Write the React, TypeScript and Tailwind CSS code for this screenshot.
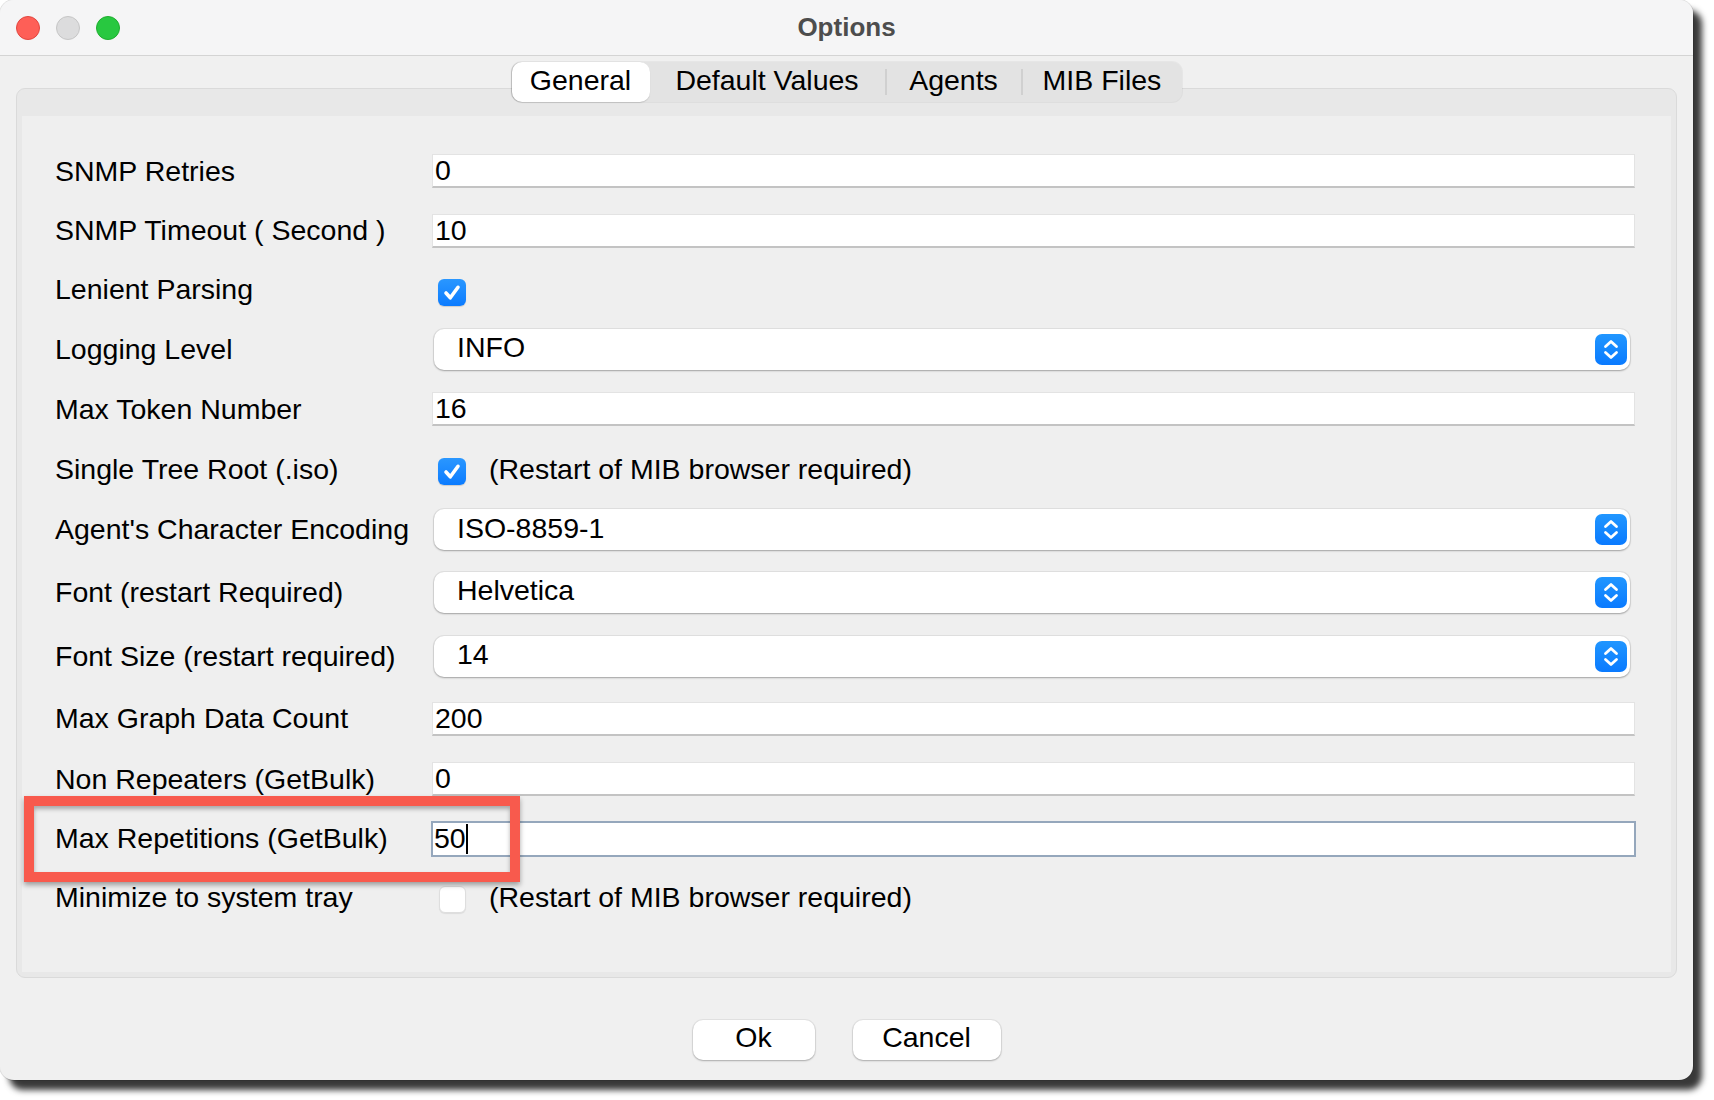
import React from "react";

type Row = {
    label: string;
    kind: "text" | "check" | "combo" | "focus";
    value?: string;
    checked?: boolean;
    note?: string;
    h: number;
};

const rows: Row[] = [
    { label: "SNMP Retries", kind: "text", value: "0", h: 60 },
    { label: "SNMP Timeout ( Second )", kind: "text", value: "10", h: 59 },
    { label: "Lenient Parsing", kind: "check", checked: true, h: 59 },
    { label: "Logging Level", kind: "combo", value: "INFO", h: 60 },
    { label: "Max Token Number", kind: "text", value: "16", h: 60 },
    { label: "Single Tree Root (.iso)", kind: "check", checked: true, note: "(Restart of MIB browser required)", h: 60 },
    { label: "Agent's Character Encoding", kind: "combo", value: "ISO-8859-1", h: 61 },
    { label: "Font (restart Required)", kind: "combo", value: "Helvetica", h: 64 },
    { label: "Font Size (restart required)", kind: "combo", value: "14", h: 64 },
    { label: "Max Graph Data Count", kind: "text", value: "200", h: 61 },
    { label: "Non Repeaters (GetBulk)", kind: "text", value: "0", h: 60 },
    { label: "Max Repetitions (GetBulk)", kind: "focus", value: "50", h: 59 },
    { label: "Minimize to system tray", kind: "check", checked: false, note: "(Restart of MIB browser required)", h: 58 },
];

const tabs = [
    { name: "General", w: "w-[138px]" },
    { name: "Default Values", w: "w-[235px]" },
    { name: "Agents", w: "w-[134px]" },
    { name: "MIB Files", w: "w-[159px]" },
];

const Checkbox: React.FC<{ checked: boolean }> = ({ checked }) => {
    if (!checked) {
        return <div className="w-[27px] h-[27px] rounded-[6px] bg-white border border-[#dedede] shadow-[0_1px_1px_rgba(0,0,0,0.08)] ml-[7px] mt-[4px]" />;
    }
    return (
        <div className="w-[28px] h-[27px] rounded-[6px] bg-gradient-to-b from-[#2a97ff] to-[#0a7bff] flex items-center justify-center ml-[6px] mt-[5px] shadow-[0_1px_1px_rgba(0,0,0,0.15)]">
            <svg width="28" height="27" viewBox="0 0 28 27">
                <path d="M8 14 L12.3 18.8 L20 8.3" fill="none" stroke="white" strokeWidth="3.6" strokeLinecap="round" strokeLinejoin="round" />
            </svg>
        </div>
    );
};

const Stepper: React.FC = () => (
    <div className="w-[32px] h-[31px] rounded-[7px] bg-gradient-to-b from-[#2196ff] to-[#0a7aff] flex items-center justify-center">
        <svg width="32" height="31" viewBox="0 0 32 31">
            <path d="M10.5 12.5 L16 7.5 L21.5 12.5" fill="none" stroke="white" strokeWidth="2.8" strokeLinecap="round" strokeLinejoin="round" />
            <path d="M10.5 18.5 L16 23.5 L21.5 18.5" fill="none" stroke="white" strokeWidth="2.8" strokeLinecap="round" strokeLinejoin="round" />
        </svg>
    </div>
);

const Field: React.FC<{ row: Row }> = ({ row }) => {
    if (row.kind === "text") {
        return (
            <div className="flex-1 h-[34px] bg-white border border-[#e3e3e3] border-b-[#c3c3c3] border-b-2 flex items-center pl-[2px] leading-none">
                {row.value}
            </div>
        );
    }
    if (row.kind === "focus") {
        return (
            <div className="flex-1 h-[36px] bg-white border-2 border-[#95a7bc] flex items-center pl-[1px] leading-none -ml-[1px] -mr-[1px]">
                <span>{row.value}</span>
                <span className="w-[2px] h-[30px] bg-black" />
            </div>
        );
    }
    if (row.kind === "combo") {
        return (
            <div className="flex-1 h-[41px] ml-[2px] mr-[5px] bg-white rounded-[10px] shadow-[0_0_0_1px_rgba(0,0,0,0.06),0_1px_2px_rgba(0,0,0,0.28)] flex items-center justify-between pl-[23px] pr-[3px] leading-none">
                <span className="-mt-[3px]">{row.value}</span>
                <Stepper />
            </div>
        );
    }
    return (
        <div className="flex-1 flex items-center">
            <Checkbox checked={!!row.checked} />
            {row.note && <span className="ml-[23px] leading-none">{row.note}</span>}
        </div>
    );
};

const App: React.FC = () => {
    return (
        <div className="w-[1714px] h-[1100px] bg-white relative text-black" style={{ fontFamily: '"Liberation Sans", Arial, sans-serif' }}>
            <div className="w-[1693px] h-[1080px] bg-[#f0f0f0] rounded-[14px] overflow-hidden flex flex-col shadow-[9px_10px_6px_rgba(0,0,0,0.78),0_0_0_1px_rgba(0,0,0,0.12)]">
                {/* title bar */}
                <div className="h-[56px] shrink-0 bg-[#f5f5f6] border-b border-[#d4d4d4] grid grid-cols-[1fr_auto_1fr] items-center">
                    <div className="flex items-center gap-[16px] pl-[16px]">
                        <div className="w-[24px] h-[24px] rounded-full bg-[#fe5f57] border border-[#e2463f]" />
                        <div className="w-[24px] h-[24px] rounded-full bg-[#dcdcdd] border border-[#c6c6c6]" />
                        <div className="w-[24px] h-[24px] rounded-full bg-[#28c840] border border-[#1eae2e]" />
                    </div>
                    <div className="text-[26px] font-bold text-[#4d4d4d] -mt-[1px]">Options</div>
                    <div />
                </div>

                {/* tabs */}
                <div className="flex justify-center mt-[6px] relative z-10">
                    <div className="flex items-center h-[40px] bg-[#e3e3e3] rounded-[10px] shadow-[0_0_0_1px_rgba(0,0,0,0.04)]">
                        {tabs.map((t, i) => (
                            <div key={i} className="flex items-center h-full">
                                {i >= 2 && <div className="w-[2px] h-[26px] bg-[#d0d0d0]" />}
                                <div className={`${t.w} h-full flex items-center justify-center text-[28.5px] leading-none pb-[3px] ${i === 0 ? "bg-white rounded-[10px] shadow-[-1px_0_1px_rgba(0,0,0,0.18),0_1px_1px_rgba(0,0,0,0.12)]" : ""}`}>
                                    {t.name}
                                </div>
                            </div>
                        ))}
                    </div>
                </div>

                {/* panel */}
                <div className="mx-[16px] -mt-[14px] h-[890px] rounded-[9px] border border-[#dadada] bg-[#e8e8e8] pt-[27px] px-[5px] pb-[5px] flex">
                    <div className="flex-1 bg-[#efefef] pt-[25px] pr-[36px] flex flex-col text-[28.5px]">
                        {rows.map((r, i) => (
                            <div key={i} className="flex items-center" style={{ height: r.h }}>
                                <div className="w-[410px] shrink-0 pl-[33px] leading-none">{r.label}</div>
                                <Field row={r} />
                            </div>
                        ))}
                    </div>
                </div>

                {/* buttons */}
                <div className="flex justify-center gap-[38px] mt-[42px] text-[28.5px]">
                    <div className="w-[122px] h-[40px] bg-white rounded-[10px] shadow-[0_0_0_1px_rgba(0,0,0,0.05),0_1px_2px_rgba(0,0,0,0.25)] flex items-center justify-center leading-none pb-[5px]">Ok</div>
                    <div className="w-[148px] h-[40px] bg-white rounded-[10px] shadow-[0_0_0_1px_rgba(0,0,0,0.05),0_1px_2px_rgba(0,0,0,0.25)] flex items-center justify-center leading-none pb-[5px]">Cancel</div>
                </div>
            </div>

            {/* annotation box */}
            <div className="absolute left-[24px] top-[796px] w-[496px] h-[86px] border-[10px] border-[#f85a4d] shadow-[0_3px_5px_rgba(0,0,0,0.35),inset_0_3px_4px_rgba(0,0,0,0.3)]" />
        </div>
    );
};

export default App;
